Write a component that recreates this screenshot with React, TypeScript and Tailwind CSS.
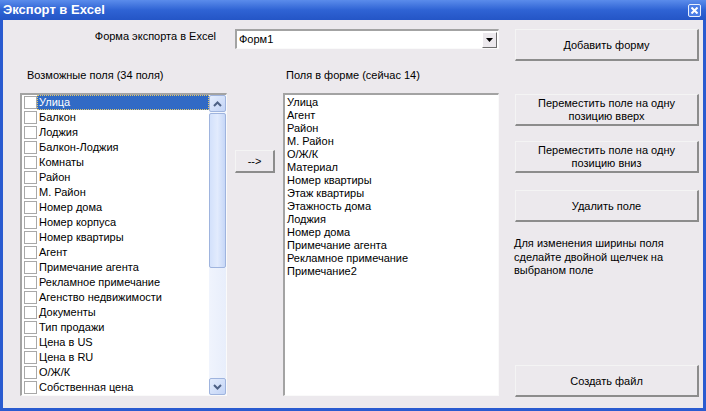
import React from 'react';

const available = [
  'Улица',
  'Балкон',
  'Лоджия',
  'Балкон-Лоджия',
  'Комнаты',
  'Район',
  'М. Район',
  'Номер дома',
  'Номер корпуса',
  'Номер квартиры',
  'Агент',
  'Примечание агента',
  'Рекламное примечание',
  'Агенство недвижимости',
  'Документы',
  'Тип продажи',
  'Цена в US',
  'Цена в RU',
  'О/Ж/К',
  'Собственная цена',
];

const inForm = [
  'Улица',
  'Агент',
  'Район',
  'М. Район',
  'О/Ж/К',
  'Материал',
  'Номер квартиры',
  'Этаж квартиры',
  'Этажность дома',
  'Лоджия',
  'Номер дома',
  'Примечание агента',
  'Рекламное примечание',
  'Примечание2',
];

const Btn = ({ children, className = '' }: { children: React.ReactNode; className?: string }) => (
  <button
    className={`flex items-center justify-center border-t border-l border-t-[#f4f4f4] border-l-[#f4f4f4] border-r-2 border-b-2 border-r-[#8c8c8c] border-b-[#8c8c8c] bg-[#ece9ed] pt-[1px] text-center leading-[13px] text-black ${className}`}
  >
    {children}
  </button>
);

const ScrollArrow = ({ up }: { up?: boolean }) => (
  <div className="flex h-[17px] w-[17px] items-center justify-center rounded-[2px] border border-[#9fb4de] bg-gradient-to-br from-[#e4edfd] to-[#c3d4f6]">
    <svg width="9" height="6" viewBox="0 0 9 6">
      <path
        d={up ? 'M1 5 L4.5 1.5 L8 5' : 'M1 1 L4.5 4.5 L8 1'}
        fill="none"
        stroke="#4d6185"
        strokeWidth="2"
      />
    </svg>
  </div>
);

export default function App() {
  return (
    <div
      className="flex h-[411px] w-[706px] flex-col overflow-hidden bg-[#2a5bd0] text-[11px] text-black"
      style={{ fontFamily: '"Liberation Sans", Arial, sans-serif' }}
    >
      {/* title bar */}
      <div className="flex h-[20px] items-center justify-between bg-gradient-to-b from-[#5b8ceb] via-[#2f63d4] to-[#2455c6] pl-[3px] pr-[5px]">
        <span className="text-[13px] font-bold text-white">Экспорт в Excel</span>
        <div className="flex h-[13px] w-[13px] items-center justify-center rounded-[2px] border border-[#e8eefc] bg-[#4a7de6]">
          <svg width="7" height="7" viewBox="0 0 7 7">
            <path d="M0.5 0.5 L6.5 6.5 M6.5 0.5 L0.5 6.5" stroke="white" strokeWidth="2" />
          </svg>
        </div>
      </div>

      {/* body */}
      <div className="flex flex-1 items-start border-x-[3px] border-b-[3px] border-[#2a5bd0] bg-[#ece9ed] pl-[17px] pt-[9px]">
        {/* left part */}
        <div className="flex w-[479px] flex-col">
          <div className="flex h-[20px]">
            <div className="mt-[1px] w-[215px] pr-[19px] text-right leading-[13px]">Форма экспорта в Excel</div>
            <div className="flex w-[264px] items-center justify-between border-t-2 border-l-2 border-t-[#a3a3a3] border-l-[#a3a3a3] border-b border-r border-b-[#fafafa] border-r-[#fafafa] bg-white pl-[2px] pr-[1px]">
              <span className="leading-[13px]">Форм1</span>
              <div className="flex h-[16px] w-[15px] items-center justify-center border-t border-l border-t-white border-l-white border-r border-b border-r-[#6d6d6d] border-b-[#6d6d6d] bg-[#ece9ed]">
                <svg width="7" height="4" viewBox="0 0 7 4">
                  <path d="M0 0 H7 L3.5 4 Z" fill="black" />
                </svg>
              </div>
            </div>
          </div>

          <div className="mt-[20px] flex h-[13px] leading-[13px]">
            <div className="w-[266px] pl-[7px]">Возможные поля (34 поля)</div>
            <div>Поля в форме (сейчас 14)</div>
          </div>

          <div className="mt-[11px] flex h-[303px] items-start">
            {/* available fields */}
            <div className="flex h-full w-[207px] border-t-2 border-l-2 border-t-[#a3a3a3] border-l-[#a3a3a3] border-b border-r border-b-[#fafafa] border-r-[#fafafa] bg-white">
              <div className="flex-1 overflow-hidden pl-[2px]">
                {available.map((f, i) => (
                  <div key={f} className="flex h-[15px] items-center">
                    <div className="h-[13px] w-[13px] shrink-0 border border-[#a8a8a8] bg-white" />
                    <div
                      className={`flex h-[15px] flex-1 items-center whitespace-nowrap pl-[1px] leading-[13px] ${
                        i === 0 ? 'border border-dotted border-[#e2c868] bg-[#316ac5] text-white' : 'border border-transparent'
                      }`}
                    >
                      {f}
                    </div>
                  </div>
                ))}
              </div>
              <div className="flex h-full w-[17px] flex-col bg-[#f2f6fe]">
                <ScrollArrow up />
                <div className="mt-[1px] h-[155px] w-[17px] rounded-[2px] border border-[#9fb4de] bg-gradient-to-r from-[#d3e1fb] via-[#e2ebfd] to-[#c6d7f7]" />
                <div className="flex-1 bg-gradient-to-r from-[#f0f4fd] to-[#e8eefb]" />
                <ScrollArrow />
              </div>
            </div>

            <Btn className="ml-[8px] mt-[57px] h-[23px] w-[40px]">--&gt;</Btn>

            {/* fields in form */}
            <div className="ml-[8px] h-full w-[216px] border-t-2 border-l-2 border-t-[#a3a3a3] border-l-[#a3a3a3] border-b border-r border-b-[#fafafa] border-r-[#fafafa] bg-white pl-[2px] pt-[1px]">
              {inForm.map((f) => (
                <div key={f} className="h-[13px] whitespace-nowrap leading-[13px]">
                  {f}
                </div>
              ))}
            </div>
          </div>
        </div>

        {/* right buttons */}
        <div className="ml-[16px] flex h-[368px] w-[184px] flex-col">
          <Btn className="h-[32px]">Добавить форму</Btn>
          <Btn className="mt-[33px] h-[32px]">
            Переместить поле на одну
            <br />
            позицию вверх
          </Btn>
          <Btn className="mt-[15px] h-[32px]">
            Переместить поле на одну
            <br />
            позицию вниз
          </Btn>
          <Btn className="mt-[17px] h-[32px]">Удалить поле</Btn>
          <div className="-ml-[1px] mt-[15px] leading-[13.5px]">
            Для изменения ширины поля
            <br />
            сделайте двойной щелчек на
            <br />
            выбраном поле
          </div>
          <Btn className="mt-auto h-[32px]">Создать файл</Btn>
        </div>
      </div>
    </div>
  );
}
